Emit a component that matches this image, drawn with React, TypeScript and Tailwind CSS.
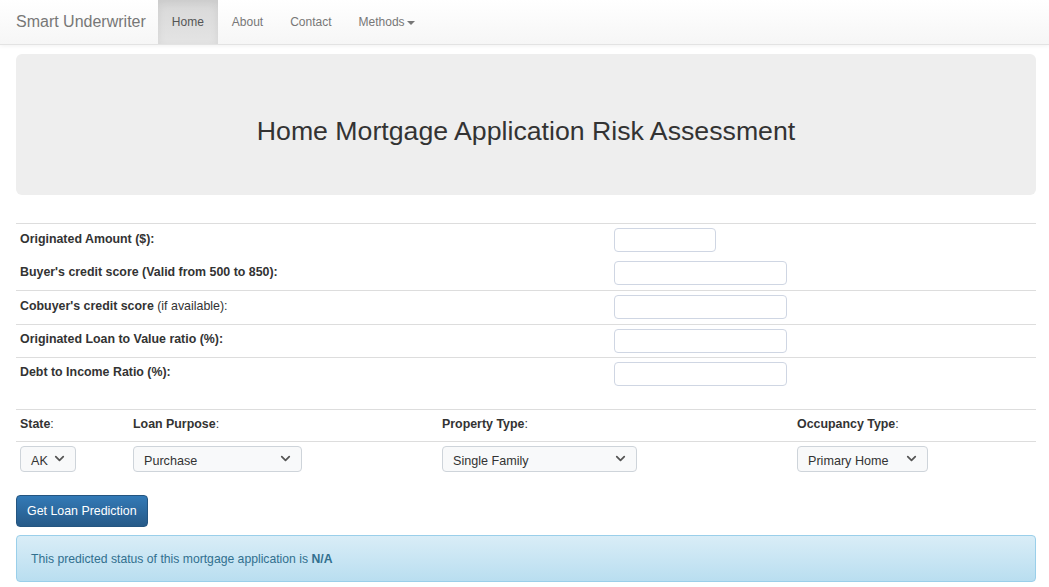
import { ChevronDown } from "lucide-react";

const font = { fontFamily: '"Liberation Sans", Arial, sans-serif' };

function FakeSelect({ value, width }: { value: string; width: string }) {
  return (
    <div
      className={`flex h-[26px] ${width} items-center justify-between rounded-[4px] border border-[#ced4da] bg-[#f8f9fa] pl-[10px] pr-[8px] pt-[4px] text-[12.6px] text-[#333]`}
    >
      <span>{value}</span>
      <ChevronDown size={15} strokeWidth={2.8} className="-mt-[5px] text-[#555]" />
    </div>
  );
}

function Field({ width = "w-[173px]" }: { width?: string }) {
  return (
    <input
      type="text"
      className={`h-[24px] ${width} rounded-[4px] border border-[#cfd6e3] bg-white outline-none`}
    />
  );
}

const rows: { label: React.ReactNode; input: React.ReactNode; h: string; line: boolean }[] = [
  { label: <b>Originated Amount ($):</b>, input: <Field width="w-[102px]" />, h: "h-[34px]", line: true },
  { label: <b>Buyer's credit score (Valid from 500 to 850):</b>, input: <Field />, h: "h-[33px]", line: false },
  {
    label: (
      <>
        <b>Cobuyer's credit score</b> (if available):
      </>
    ),
    input: <Field />,
    h: "h-[34px]",
    line: true,
  },
  { label: <b>Originated Loan to Value ratio (%):</b>, input: <Field />, h: "h-[33px]", line: true },
  { label: <b>Debt to Income Ratio (%):</b>, input: <Field />, h: "h-[33px]", line: true },
];

export default function App() {
  return (
    <div style={font} className="min-h-[587px] bg-white text-[12.4px] text-[#333]">
      {/* navbar */}
      <nav className="flex h-[45px] items-stretch border-b border-[#e3e3e3] bg-gradient-to-b from-white to-[#f6f6f6] shadow-[0_1px_4px_rgba(0,0,0,0.06)]">
        <div className="flex items-center pl-[16px] pr-[12px] text-[16px] text-[#777]">Smart Underwriter</div>
        <a className="flex w-[60px] items-center justify-center bg-gradient-to-b from-[#d8d8d8] to-[#e4e4e4] text-[12px] text-[#555] shadow-[inset_0_3px_9px_rgba(0,0,0,0.07)]">
          Home
        </a>
        <a className="flex items-center px-[14px] text-[12px] text-[#777]">About</a>
        <a className="flex items-center px-[13px] text-[12px] text-[#777]">Contact</a>
        <a className="flex items-center px-[14px] text-[12px] text-[#777]">
          Methods
          <span className="ml-[2px] mt-[1px] h-0 w-0 border-x-[4px] border-t-[4px] border-x-transparent border-t-[#777]" />
        </a>
      </nav>

      <main className="pl-[16px] pr-[13px] pt-[9px]">
        {/* jumbotron */}
        <div className="flex h-[141px] items-center justify-center rounded-[6px] bg-[#eee] pt-[13px]">
          <h1 className="text-[26.7px] font-normal text-[#333]">Home Mortgage Application Risk Assessment</h1>
        </div>

        {/* numeric fields */}
        <div className="mt-[28px]">
          {rows.map((r, i) => (
            <div
              key={i}
              className={`grid ${r.h} grid-cols-[594px_1fr] items-center ${r.line ? "border-t border-[#ddd]" : ""}`}
            >
              <div className="pl-[4px] pb-[3px]">{r.label}</div>
              <div className="pl-[4px] pb-[1px]">{r.input}</div>
            </div>
          ))}
        </div>

        {/* selects */}
        <div className="mt-[19px] border-t border-[#ddd]">
          <div className="grid h-[32px] grid-cols-[113px_309px_355px_1fr] items-center border-b border-[#ddd] pb-[2px] font-bold">
            <div className="pl-[4px]">
              State<span className="font-normal">:</span>
            </div>
            <div className="pl-[4px]">
              Loan Purpose<span className="font-normal">:</span>
            </div>
            <div className="pl-[4px]">
              Property Type<span className="font-normal">:</span>
            </div>
            <div className="pl-[4px]">
              Occupancy Type<span className="font-normal">:</span>
            </div>
          </div>
          <div className="grid grid-cols-[113px_309px_355px_1fr] pt-[4px]">
            <div className="pl-[4px]">
              <FakeSelect value="AK" width="w-[56px]" />
            </div>
            <div className="pl-[4px]">
              <FakeSelect value="Purchase" width="w-[169px]" />
            </div>
            <div className="pl-[4px]">
              <FakeSelect value="Single Family" width="w-[195px]" />
            </div>
            <div className="pl-[4px]">
              <FakeSelect value="Primary Home" width="w-[131px]" />
            </div>
          </div>
        </div>

        <button className="mt-[23px] h-[32px] rounded-[4px] border border-[#245580] bg-gradient-to-b from-[#337ab7] to-[#265a88] px-[10px] text-[12.4px] text-white">
          Get Loan Prediction
        </button>

        <div className="mt-[8px] flex h-[47px] items-center rounded-[4px] border border-[#9acfea] bg-gradient-to-b from-[#d9edf7] to-[#b9def0] pl-[14px] pt-[2px] text-[12.2px] text-[#31708f]">
          This predicted status of this mortgage application is&nbsp;<b>N/A</b>
        </div>
      </main>
    </div>
  );
}
